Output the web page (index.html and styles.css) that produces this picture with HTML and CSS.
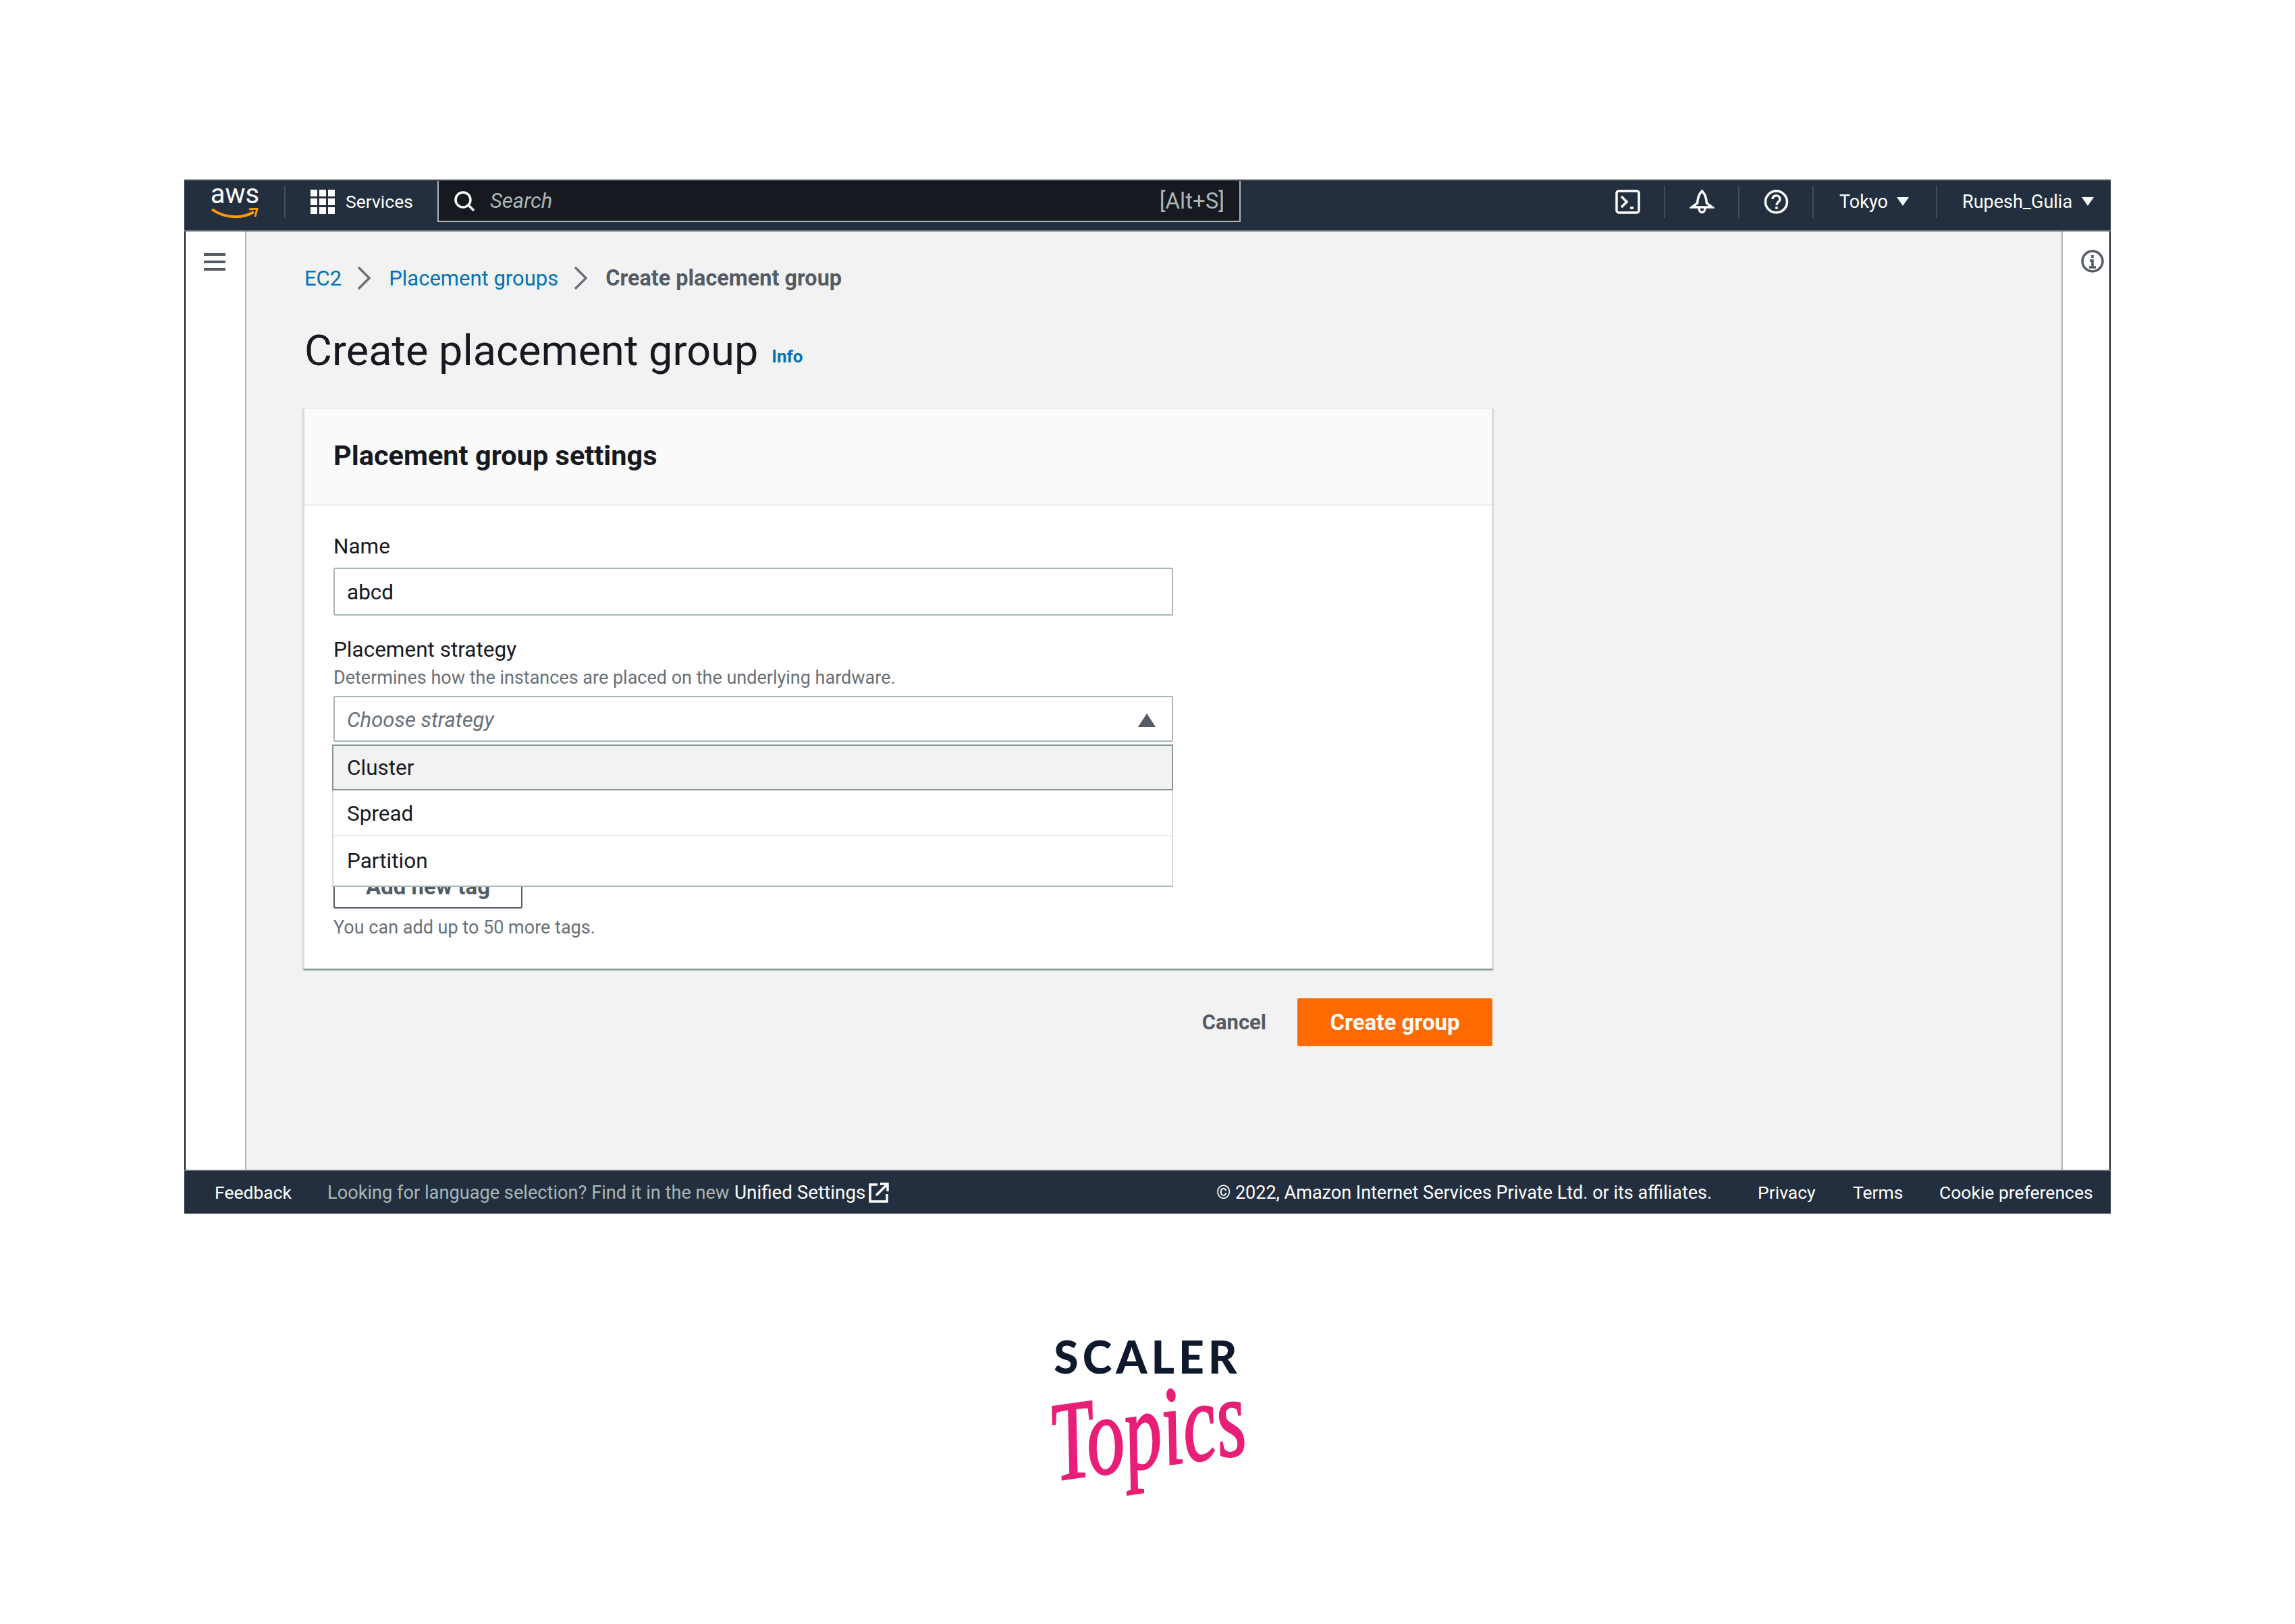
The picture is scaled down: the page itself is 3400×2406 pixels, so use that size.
FILE: index.html
```html
<!DOCTYPE html>
<html lang="en">
<head>
<meta charset="utf-8">
<title>Create placement group</title>
<link rel="stylesheet" href="styles.css">
</head>
<body>
<div class="frame">
  <header class="topbar">
    <div class="aws-logo">
      <span class="aws-word">aws</span>
      <svg class="aws-smile" viewBox="0 0 70 16" width="70" height="16"><path d="M1 2c18 13 44 15 62 4" fill="none" stroke="#f90" stroke-width="4"/><path d="M56 2l12-1-3 12" fill="none" stroke="#f90" stroke-width="3"/></svg>
    </div>
    <div class="sep sep-logo"></div>
    <svg class="grid-icon" viewBox="0 0 36 36" width="36" height="36" fill="#fff"><rect width="10" height="10"/><rect x="13" width="10" height="10"/><rect x="26" width="10" height="10"/><rect y="13" width="10" height="10"/><rect x="13" y="13" width="10" height="10"/><rect x="26" y="13" width="10" height="10"/><rect y="26" width="10" height="10"/><rect x="13" y="26" width="10" height="10"/><rect x="26" y="26" width="10" height="10"/></svg>
    <span class="services">Services</span>
    <div class="search">
      <svg class="search-icon" viewBox="0 0 31 30" width="31" height="30" fill="none" stroke="#fff" stroke-width="3.500"><circle cx="13" cy="13" r="11"/><path d="M21 21l8 8"/></svg>
      <span class="search-text">Search</span>
      <span class="search-key">[Alt+S]</span>
    </div>
    <svg class="tb-icon tb-terminal" viewBox="0 0 37 36" width="37" height="36" fill="none" stroke="#fff" stroke-width="3.500"><rect x="2" y="2" width="33" height="32" rx="3"/><path d="M9 10l8 8-8 8"/><path d="M22 27h5"/></svg>
    <div class="sep sep-a"></div>
    <svg class="tb-icon tb-bell" viewBox="0 0 37 36" width="37" height="36" fill="none" stroke="#fff" stroke-width="3.500"><path d="M18.500 2c-5 5-6 10-7 18l-8 6h30l-8-6c-1-8-2-13-7-18z"/><path d="M14 27c0 9 9 9 9 0"/></svg>
    <div class="sep sep-b"></div>
    <svg class="tb-icon tb-help" viewBox="0 0 37 36" width="37" height="36" fill="none" stroke="#fff" stroke-width="3.500"><circle cx="18.500" cy="18" r="16"/><path d="M13 14c0-7 11-7 11 0 0 4-5 4-5 9"/><path d="M19 25v4"/></svg>
    <div class="sep sep-c"></div>
    <span class="tb-menu tb-tokyo">Tokyo</span>
    <span class="tb-caret"></span>
    <div class="sep sep-d"></div>
    <span class="tb-menu tb-user">Rupesh_Gulia</span>
    <span class="tb-caret"></span>
  </header>

  <div class="middle">
    <aside class="nav">
      <svg class="hamburger" viewBox="0 0 32 26" width="32" height="26" fill="#545b64"><rect width="32" height="4"/><rect y="11" width="32" height="4"/><rect y="22" width="32" height="4"/></svg>
    </aside>

    <main class="content">
      <nav class="crumbs">
        <a class="crumb-link">EC2</a>
        <svg class="chev" viewBox="0 0 20 34" width="20" height="34" fill="none" stroke="#687078" stroke-width="3.500"><path d="M2 1l16 16-16 16"/></svg>
        <a class="crumb-link">Placement groups</a>
        <svg class="chev" viewBox="0 0 20 34" width="20" height="34" fill="none" stroke="#687078" stroke-width="3.500"><path d="M2 1l16 16-16 16"/></svg>
        <span class="crumb-now">Create placement group</span>
      </nav>

      <div class="title-row">
        <h1 class="title">Create placement group</h1>
        <a class="info">Info</a>
      </div>

      <section class="card">
        <div class="card-head"><h2 class="card-title">Placement group settings</h2></div>
        <div class="card-body">
          <label class="label label-name">Name</label>
          <div class="input">abcd</div>
          <label class="label label-strategy">Placement strategy</label>
          <p class="desc">Determines how the instances are placed on the underlying hardware.</p>
          <div class="select-wrap">
            <div class="select">
              <span class="placeholder">Choose strategy</span>
              <span class="select-caret"></span>
            </div>
            <ul class="dropdown">
              <li class="opt opt-active">Cluster</li>
              <li class="opt opt-mid">Spread</li>
              <li class="opt opt-last">Partition</li>
            </ul>
          </div>
          <button class="add-tag">Add new tag</button>
          <p class="desc desc-tags">You can add up to 50 more tags.</p>
        </div>
      </section>

      <div class="actions">
        <a class="cancel">Cancel</a>
        <button class="create">Create group</button>
      </div>
    </main>

    <aside class="tools">
      <svg class="info-icon" viewBox="0 0 34 34" width="34" height="34" fill="none" stroke="#545b64" stroke-width="3.500"><circle cx="17" cy="17" r="15"/><path d="M17 8v4M13 16h4v10M12 26h10"/></svg>
    </aside>
  </div>

  <footer class="footer">
    <span class="foot-feedback">Feedback</span>
    <span class="foot-lang">Looking for language selection? Find it in the new</span>
    <span class="foot-unified">Unified Settings</span>
    <svg class="ext" viewBox="0 0 30 30" width="30" height="30" fill="none" stroke="#fff" stroke-width="3.500"><path d="M13 3H2v25h25V17"/><path d="M11 19L27 3M17 2h11v11"/></svg>
    <span class="foot-copy">© 2022, Amazon Internet Services Private Ltd. or its affiliates.</span>
    <span class="foot-privacy">Privacy</span>
    <span class="foot-terms">Terms</span>
    <span class="foot-cookie">Cookie preferences</span>
  </footer>
</div>

<div class="scaler">
  <span class="scaler-word">SCALER</span>
  <span class="scaler-topics">Topics</span>
</div>
</body>
</html>
```
FILE: styles.css
```css
* { box-sizing: border-box; }
html, body { margin: 0; padding: 0; }
body {
  width: 3400px;
  height: 2406px;
  background: #fff;
  padding-top: 266px;
  font-family: Roboto, "Liberation Sans", sans-serif;
  color: #16191f;
  overflow: hidden;
}
p, h1, h2, ul { margin: 0; padding: 0; }

.frame {
  width: 2854px;
  height: 1532px;
  margin-left: 273px;
  display: flex;
  flex-direction: column;
  border-left: 2px solid #16191f;
  border-right: 2px solid #16191f;
}

/* top bar */
.topbar {
  flex: 0 0 77px;
  margin: 0 -2px;
  padding-bottom: 12px;
  background: #232f3e;
  border-top: 2px solid #3d4652;
  border-bottom: 2px solid #687078;
  display: flex;
  align-items: center;
  color: #fff;
}
.aws-logo { width: 70px; margin-left: 40px; display: flex; flex-direction: column; align-items: center; height: 56px; }
.aws-word { font-size: 40px; line-height: 34px; font-weight: 400; }
.aws-smile { margin-top: 3px; }
.sep { width: 2px; height: 48px; background: #414d5c; }
.sep-logo { margin-left: 38px; }
.grid-icon { margin-left: 37px; }
.services { margin-left: 16px; font-size: 26.500px; width: 121px; white-space: nowrap; }
.search {
  width: 1190px;
  height: 61px;
  align-self: flex-start;
  margin-left: 15px;
  background: #16191f;
  border: 2px solid #aab7b8;
  border-top: 0;
  display: flex;
  align-items: center;
}
.search-icon { margin-left: 23px; }
.search-text { margin-left: 22px; font-size: 31px; font-style: italic; color: #aab7b8; }
.search-key { margin-left: auto; margin-right: 22px; font-size: 33px; color: #aab7b8; }
.tb-terminal { margin-left: 555px; }
.sep-a { margin-left: 35px; }
.tb-bell { margin-left: 36px; }
.sep-b { margin-left: 35px; }
.tb-help { margin-left: 36px; }
.sep-c { margin-left: 35px; }
.tb-menu { font-size: 27px; white-space: nowrap; }
.tb-tokyo { margin-left: 38px; width: 73px; }
.tb-caret { margin-left: 12px; width: 0; height: 0; border-left: 9px solid transparent; border-right: 9px solid transparent; border-top: 13px solid #fff; }
.sep-d { margin-left: 40px; }
.tb-user { margin-left: 37px; width: 165px; }

/* middle */
.middle { flex: 1; display: flex; min-height: 0; }
.nav { flex: 0 0 90px; background: #fff; border-right: 2px solid #aab7b8; padding: 32px 0 0 27px; }
.hamburger { display: block; }
.tools { flex: 0 0 71px; background: #fff; border-left: 2px solid #aab7b8; padding: 27px 0 0 27px; }
.info-icon { display: block; }
.content { flex: 1; background: #f2f2f2; padding: 44px 0 0 84px; }

.crumbs { height: 50px; display: flex; align-items: center; font-size: 31px; white-space: nowrap; }
.crumb-link { color: #0073bb; margin-left: 2px; }
.chev { margin: 0 25px 0 23px; }
.crumb-now { color: #545b64; font-weight: 700; font-size: 32.400px; margin-left: 2px; }

.title-row { height: 70px; margin-top: 46px; display: flex; align-items: center; }
.title { font-size: 63px; line-height: 70px; font-weight: 400; margin: 4px 0 0 2px; }
.info { margin-left: 20px; margin-top: 20px; font-size: 26px; font-weight: 700; color: #0073bb; }

.card {
  width: 1763px;
  margin-top: 52px;
  background: #fff;
  border: 2px solid #d5dbdb;
  border-top: 1px solid #eaeded;
  border-bottom: 2px solid #879596;
  box-shadow: 0 1px 2px rgba(0, 28, 36, .3);
}
.card-head { height: 143px; background: #fafafa; border-bottom: 2px solid #eaeded; padding-left: 43px; display: flex; align-items: center; }
.card-title { font-size: 41.500px; font-weight: 700; margin-top: -5px; }
.card-body { padding: 42px 0 46px 43px; }
.label { display: block; font-size: 31.500px; line-height: 38px; }
.input {
  width: 1244px;
  height: 71px;
  margin-top: 12px;
  padding-left: 18px;
  border: 2px solid #aab7b8;
  border-radius: 2px;
  background: #fff;
  font-size: 31.500px;
  line-height: 69px;
}
.label-strategy { margin-top: 32px; }
.desc { font-size: 27px; line-height: 30px; color: #687078; margin-top: 7px; }
.select-wrap { position: relative; width: 1244px; margin-top: 12px; }
.select {
  height: 68px;
  padding: 3px 24px 0 18px;
  border: 2px solid #aab7b8;
  border-radius: 2px;
  display: flex;
  align-items: center;
  justify-content: space-between;
}
.placeholder { font-size: 31px; font-style: italic; color: #687078; }
.select-caret { width: 0; height: 0; border-left: 13px solid transparent; border-right: 13px solid transparent; border-bottom: 20px solid #545b64; }
.dropdown {
  position: absolute;
  top: 72px;
  left: -2px;
  width: 1246px;
  list-style: none;
  background: #fff;
  border-left: 2px solid #d5dbdb;
  border-right: 2px solid #d5dbdb;
  border-bottom: 2px solid #aab7b8;
  font-size: 31.500px;
}
.opt { padding-left: 20px; display: flex; align-items: center; height: 68px; }
.opt-active { height: 68px; background: #f2f2f2; border: 2px solid #879596; margin: 0 -2px; }
.opt-mid { border-bottom: 2px solid #eaeded; padding-top: 2px; }
.opt-last { height: 73px; }
.add-tag {
  display: block;
  width: 280px;
  height: 66px;
  margin-top: 181px;
  background: #fff;
  border: 2px solid #545b64;
  border-radius: 2px;
  font: 700 33px Roboto, sans-serif;
  color: #545b64;
}
.desc-tags { margin-top: 13px; }

.actions { width: 1763px; margin-top: 42px; display: flex; align-items: center; justify-content: flex-end; }
.cancel { font-size: 31px; font-weight: 700; color: #545b64; margin-right: 46px; }
.create {
  width: 289px;
  height: 71px;
  border: 0;
  border-radius: 2px;
  background: #ff6b00;
  color: #fff;
  font: 700 33px Roboto, sans-serif;
  margin-right: 1px;
}

/* footer */
.footer {
  flex: 0 0 65px;
  margin: 0 -2px;
  background: #232f3e;
  border-top: 2px solid #687078;
  display: flex;
  align-items: center;
  font-size: 26.500px;
  color: #fff;
  white-space: nowrap;
}
.foot-feedback { margin-left: 45px; width: 111px; }
.foot-lang { margin-left: 56px; width: 603px; color: #aab7b8; font-size: 27.200px; }
.foot-unified { width: 199px; font-size: 27.800px; }
.ext { flex: none; }
.foot-copy { margin-left: 485px; width: 735px; font-size: 27px; }
.foot-privacy { margin-left: 67px; width: 85px; }
.foot-terms { margin-left: 56px; width: 74px; }
.foot-cookie { margin-left: 54px; }

/* brand */
.scaler { margin-top: 179px; display: flex; flex-direction: column; align-items: center; }
.scaler-word { font-family: Lato, sans-serif; font-weight: 900; font-size: 66px; line-height: 66px; letter-spacing: 6px; color: #0e1a2b; }
.scaler-topics { font-family: "Liberation Serif", serif; font-style: italic; font-size: 128px; line-height: 150px; color: #e91e76; -webkit-text-stroke: 2px #e91e76; transform: rotate(-8deg) scale(.88, 1.3); }
```
